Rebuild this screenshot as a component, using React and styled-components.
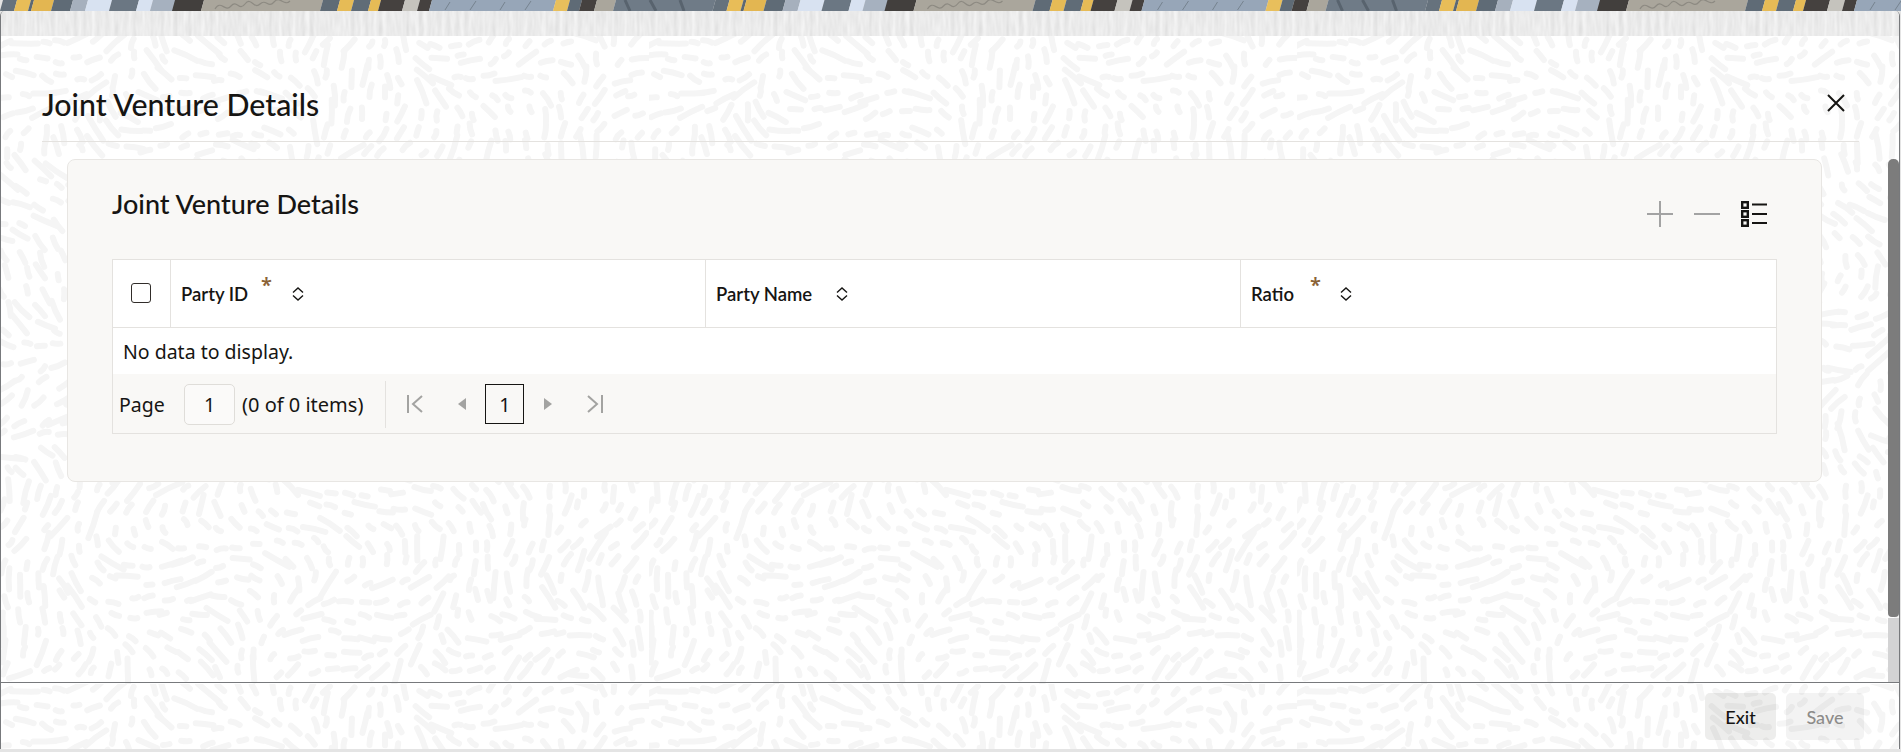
import React from "react";
import styled, { createGlobalStyle } from "styled-components";

// seeded so the texture stays the same between reloads
const makeRandom = seed => () => {
  seed = (seed * 16807) % 2147483647;
  return (seed - 1) / 2147483646;
};

const riceTile = () => {
  const size = 648;
  const step = 18;
  const rand = makeRandom(4242);
  const turn = Math.PI * 2 / size;
  let paths = "";
  for (let y = 0; y < size; y += step) {
    for (let x = 0; x < size; x += step) {
      const px = x + rand() * 10;
      const py = y + rand() * 10;
      const angle =
        1.3 +
        1.4 * Math.sin(px * turn * 2 + 1) * Math.cos(py * turn) +
        1.0 * Math.sin(py * turn * 3 + px * turn) +
        (rand() - 0.5) * 0.5;
      const len = 3 + rand() * rand() * 13;
      const dx = Math.cos(angle) * len;
      const dy = Math.sin(angle) * len;
      const bend = (rand() - 0.5) * 3;
      const d = `M${(px - dx).toFixed(1)} ${(py - dy).toFixed(1)}Q${(px - dy * bend / len).toFixed(1)} ${(py + dx * bend / len).toFixed(1)} ${(px + dx).toFixed(1)} ${(py + dy).toFixed(1)}`;
      paths += `<path d="${d}"/>`;
    }
  }
  const svg = `<svg xmlns="http://www.w3.org/2000/svg" width="${size}" height="${size}"><g fill="none" stroke="#f5f5f5" stroke-width="6" stroke-linecap="round">${paths}</g></svg>`;
  return `url("data:image/svg+xml,${encodeURIComponent(svg)}")`;
};

const streakTile = () => {
  const svg = `<svg xmlns="http://www.w3.org/2000/svg" width="600" height="25"><filter id="s" x="0" y="0" width="100%" height="100%"><feTurbulence type="fractalNoise" baseFrequency="0.22 0.05" numOctaves="2" seed="7" stitchTiles="stitch"/><feColorMatrix values="0 0 0 0 0.5 0 0 0 0 0.5 0 0 0 0 0.5 0.6 0 0 0 -0.14"/></filter><rect width="600" height="25" fill="#f4f4f4"/><rect width="600" height="25" filter="url(#s)"/></svg>`;
  return `url("data:image/svg+xml,${encodeURIComponent(svg)}")`;
};

const RICE = riceTile();
const STREAKS = streakTile();

const GlobalStyle = createGlobalStyle`
  html, body {
    margin: 0;
    padding: 0;
    overflow: hidden;
    background: #e4e4e4;
  }
  * {
    box-sizing: border-box;
  }
`;

const Page = styled.div`
  display: flex;
  flex-direction: column;
  width: 1901px;
  height: 752px;
  padding-bottom: 3px;
  font-family: "Noto Sans", "Liberation Sans", sans-serif;
  color: #161513;
`;

const BannerArt = styled.svg`
  display: block;
  flex: none;
  width: 100%;
  height: 11px;
`;

const Dialog = styled.div`
  flex: 1;
  min-height: 0;
  display: flex;
  flex-direction: column;
  position: relative;
  margin-right: 1px;
  background: #fff;
  border-left: 1px solid #77797c;
  border-right: 1px solid #77797c;
  border-radius: 5px 5px 0 0;
  overflow: hidden;
`;

const TopBand = styled.div`
  flex: none;
  height: 25px;
  background-image: ${STREAKS};
`;

const Body = styled.div`
  flex: 1;
  min-height: 0;
  display: flex;
  flex-direction: column;
  background-color: #fff;
  background-image: ${RICE};
`;

const Content = styled.div`
  flex: 1;
  min-height: 0;
  padding: 0 40px 0 41px;
`;

const Header = styled.header`
  display: flex;
  justify-content: space-between;
  height: 106px;
  padding: 47px 0 0;
  border-bottom: 1px solid #e4e2df;
`;

const Title = styled.h1`
  margin: 0;
  font-family: "Lato", "Noto Sans", sans-serif;
  font-size: 30.3px;
  font-weight: 500;
  line-height: 42px;
`;

const CloseButton = styled.button`
  display: flex;
  align-items: center;
  justify-content: center;
  width: 24px;
  height: 24px;
  margin: 8px 11px 0 0;
  padding: 0;
  border: 0;
  background: none;
  color: #161513;
`;

const Card = styled.section`
  height: 323px;
  margin: 17px 37px 0 25px;
  padding: 28px 45px 0 44px;
  background: #f9f8f6;
  border: 1px solid #e8e6e3;
  border-radius: 8px;
`;

const CardHead = styled.div`
  display: flex;
  justify-content: space-between;
  height: 71px;
`;

const CardTitle = styled.h2`
  margin: 0;
  font-family: "Lato", "Noto Sans", sans-serif;
  font-size: 27px;
  font-weight: 500;
  line-height: 32px;
`;

const Toolbar = styled.div`
  display: flex;
  gap: 21px;
  margin: 13px 9px 0 0;
`;

const ToolIcon = styled.svg`
  display: block;
  width: 26px;
  height: 26px;
  fill: none;
  stroke: ${props => (props.$muted ? "#a3a3a3" : "#161513")};
`;

const Table = styled.div`
  width: 1665px;
  background: #fff;
  border: 1px solid #e4e2df;
`;

const HeadRow = styled.div`
  display: grid;
  grid-template-columns: 57px 535px 535px 1fr;
  height: 68px;
  border-bottom: 1px solid #e4e2df;
`;

const HeadCell = styled.div`
  position: relative;
  display: flex;
  align-items: center;
  padding-left: 10px;
  border-left: 1px solid #e4e2df;
  font-family: "Lato", "Noto Sans", sans-serif;
  font-size: 18.5px;
  font-weight: 600;
`;

const CheckCell = styled.div`
  display: flex;
  align-items: center;
  justify-content: center;
  padding: 0 1px 2px 0;
`;

const Checkbox = styled.span`
  display: block;
  width: 20px;
  height: 20px;
  border: 1.5px solid #312d2a;
  border-radius: 3px;
  background: #fff;
`;

const Required = styled.span`
  position: absolute;
  top: 15px;
  left: ${props => props.$left}px;
  color: #8a6236;
  font-family: "Noto Sans", sans-serif;
  font-size: 20px;
  font-weight: 600;
  line-height: 20px;
`;

const SortIcon = styled.svg`
  display: block;
  width: 14px;
  height: 16px;
  margin-left: ${props => props.$gap}px;
  fill: none;
  stroke: #161513;
  stroke-width: 1.4;
`;

const EmptyRow = styled.div`
  display: flex;
  align-items: center;
  height: 46px;
  padding: 0 0 0 10px;
  font-size: 19.5px;
`;

const Pager = styled.div`
  display: flex;
  align-items: center;
  height: 59px;
  padding: 1px 0 0 6px;
  background: #f9f8f6;
  font-size: 19.5px;
`;

const PageLabel = styled.span`
  width: 65px;
`;

const PageInput = styled.span`
  display: flex;
  align-items: center;
  justify-content: center;
  width: 51px;
  height: 41px;
  margin-right: 7px;
  background: #fbfaf9;
  border: 1px solid #dfddd9;
  border-radius: 5px;
`;

const ItemCount = styled.span`
  font-size: 20px;
`;

const Separator = styled.span`
  width: 1px;
  height: 47px;
  margin: 0 20px 0 22px;
  background: #e4e2df;
`;

const PagerIcon = styled.svg`
  display: block;
  flex: none;
  width: ${props => props.$w}px;
  height: 20px;
  margin-left: ${props => props.$gap || 0}px;
  fill: none;
  stroke: #a3a3a1;
  stroke-width: 2;
`;

const CurrentPage = styled.span`
  display: flex;
  align-items: center;
  justify-content: center;
  width: 39px;
  height: 40px;
  margin-left: 19px;
  border: 1px solid #161513;
`;

const Footer = styled.footer`
  flex: none;
  display: flex;
  justify-content: flex-end;
  gap: 10px;
  height: 67px;
  padding: 10px 35px 0 0;
  border-top: 1px solid #77797c;
`;

const FooterButton = styled.button`
  width: ${props => props.$w}px;
  height: 47px;
  padding: 0;
  border: 0;
  border-radius: 5px;
  background: ${props => (props.disabled ? "rgba(22, 21, 19, 0.05)" : "rgba(22, 21, 19, 0.08)")};
  color: ${props => (props.disabled ? "#8d8c8a" : "#161513")};
  font-family: "Lato", "Noto Sans", sans-serif;
  font-size: 18px;
  font-weight: 500;
`;

const ScrollTrack = styled.div`
  position: absolute;
  right: 0;
  bottom: 67px;
  width: 11px;
  height: 64px;
  background: #d3d3d4;
`;

const ScrollThumb = styled.div`
  position: absolute;
  top: 148px;
  right: 0;
  width: 11px;
  height: 458px;
  background: #7c7c7c;
  border-radius: 5px 5px 4px 4px;
`;

// one repeat of the strip across the top, about 712px wide
const bannerStripes = [
  [0, 14, "#66727d"],
  [14, 28, "#e8bd58"],
  [28, 31, "#5c6873"],
  [31, 51, "#e3b651"],
  [51, 70, "#5f6b76"],
  [70, 85, "#a6b0bd"],
  [85, 109, "#d8e2f1"],
  [109, 136, "#6b7783"],
  [136, 150, "#d8e2f1"],
  [150, 175, "#a6b1bf"],
  [172, 201, "#423f3d"],
  [201, 320, "#aaa69c"],
  [320, 337, "#5f6b76"],
  [337, 351, "#e6bb56"],
  [351, 368, "#606c77"],
  [368, 378, "#e6bb56"],
  [378, 402, "#45413f"],
  [402, 417, "#c5c3bd"],
  [417, 429, "#45413f"],
  [429, 553, "#97a6b8"],
  [553, 567, "#e8bf5c"],
  [567, 579, "#5f6b76"],
  [579, 594, "#45413f"],
  [594, 613, "#aaa69c"],
  [613, 712.5, "#6f7b87"],
];

const Banner = () => (
  <BannerArt viewBox="0 0 1901 11" preserveAspectRatio="none">
    {[0, 712.5, 1425].map(offset => (
      <g key={offset} transform={`translate(${offset} 0)`}>
        {bannerStripes.map(([from, to, color]) => (
          <polygon key={from} points={`${from + 3},0 ${to + 3},0 ${to},11 ${from},11`} fill={color} />
        ))}
        <path d="M215 9c6-10 10 4 16-3s8 6 14-2 9 6 15 0 8 5 14-2 10 5 16-1" fill="none" stroke="#8d8a82" strokeWidth="1.2" />
        <path d="M445 10l5-8M470 10l6-9M500 10l5-8M525 10l6-9" stroke="#76838f" strokeWidth="1" />
        <path d="M625 0l5 11M650 0l6 11M680 0l4 11" stroke="#58636e" strokeWidth="3" />
      </g>
    ))}
  </BannerArt>
);

const Sort = ({ gap }) => (
  <SortIcon $gap={gap} viewBox="0 0 14 16">
    <path d="M2 6.5L7 2l5 4.5M2 9.5L7 14l5-4.5" />
  </SortIcon>
);

const ListIcon = () => (
  <ToolIcon viewBox="0 0 26 26">
    <g strokeWidth="2.4">
      <rect x="1.2" y="1.2" width="5.6" height="5.6" />
      <rect x="1.2" y="10.2" width="5.6" height="5.6" />
      <rect x="1.2" y="19.2" width="5.6" height="5.6" />
    </g>
    <path d="M11 3.5h15M11 13h15M11 22h15" strokeWidth="2" />
  </ToolIcon>
);

const columns = [
  { id: "party", label: "Party ID", asterisk: 90, gap: 43 },
  { id: "name", label: "Party Name", gap: 23 },
  { id: "ratio", label: "Ratio", asterisk: 69, gap: 45 },
];

const App = () => {
  return (
    <Page>
      <GlobalStyle />
      <Banner />
      <Dialog>
        <TopBand />
        <Body>
          <Content>
            <Header>
              <Title>Joint Venture Details</Title>
              <CloseButton aria-label="Close">
                <svg width="18" height="18" viewBox="0 0 18 18" fill="none" stroke="currentColor" strokeWidth="2">
                  <path d="M1 1l16 16M17 1L1 17" />
                </svg>
              </CloseButton>
            </Header>
            <Card>
              <CardHead>
                <CardTitle>Joint Venture Details</CardTitle>
                <Toolbar>
                  <ToolIcon $muted viewBox="0 0 26 26" strokeWidth="2">
                    <path d="M0 13h26M13 0v26" />
                  </ToolIcon>
                  <ToolIcon $muted viewBox="0 0 26 26" strokeWidth="2">
                    <path d="M0 13h26" />
                  </ToolIcon>
                  <ListIcon />
                </Toolbar>
              </CardHead>
              <Table>
                <HeadRow>
                  <CheckCell>
                    <Checkbox />
                  </CheckCell>
                  {columns.map(col => (
                    <HeadCell key={col.id}>
                      {col.label}
                      {col.asterisk && <Required $left={col.asterisk}>*</Required>}
                      <Sort gap={col.gap} />
                    </HeadCell>
                  ))}
                </HeadRow>
                <EmptyRow>No data to display.</EmptyRow>
                <Pager>
                  <PageLabel>Page</PageLabel>
                  <PageInput>1</PageInput>
                  <ItemCount>(0 of 0 items)</ItemCount>
                  <Separator />
                  <PagerIcon $w={18} viewBox="0 0 18 20">
                    <path d="M2 1v18M16 2L7 10l9 8" />
                  </PagerIcon>
                  <PagerIcon $w={9} $gap={33} viewBox="0 0 9 20">
                    <path d="M9 4v12L1 10z" fill="#a3a3a1" stroke="none" />
                  </PagerIcon>
                  <CurrentPage>1</CurrentPage>
                  <PagerIcon $w={9} $gap={20} viewBox="0 0 9 20">
                    <path d="M0 4v12l8-6z" fill="#a3a3a1" stroke="none" />
                  </PagerIcon>
                  <PagerIcon $w={18} $gap={33} viewBox="0 0 18 20">
                    <path d="M16 1v18M2 2l9 8-9 8" />
                  </PagerIcon>
                </Pager>
              </Table>
            </Card>
          </Content>
          <Footer>
            <FooterButton $w={71}>Exit</FooterButton>
            <FooterButton $w={78} disabled>
              Save
            </FooterButton>
          </Footer>
        </Body>
        <ScrollTrack />
        <ScrollThumb />
      </Dialog>
    </Page>
  );
};

export default App;
